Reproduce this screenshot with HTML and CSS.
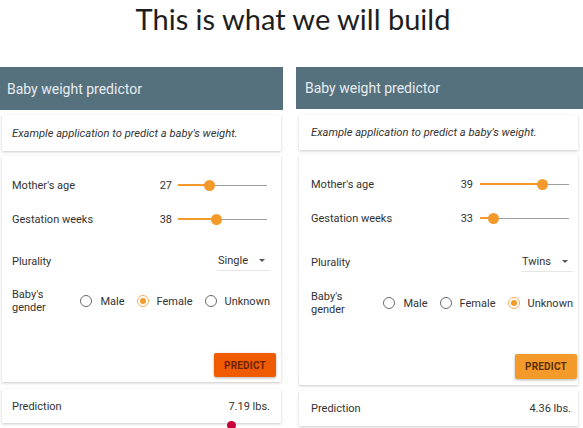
FILE: index.html
```html
<!DOCTYPE html>
<html>
<head>
<meta charset="utf-8">
<link rel="stylesheet" href="styles.css">
</head>
<body>
<h1 class="title">This is what we will build</h1>
<div class="panels">
  <section class="panel panel-a">
    <header class="panel-header">Baby weight predictor</header>
    <div class="card desc">Example application to predict a baby's weight.</div>
    <div class="card form">
      <div class="row slider-row r-age">
        <span class="label">Mother's age</span>
        <div class="slider-wrap">
          <span class="val">27</span>
          <div class="slider"><div class="fill" style="width:35%"></div><div class="thumb" style="left:35%"></div></div>
        </div>
      </div>
      <div class="row slider-row r-gest">
        <span class="label">Gestation weeks</span>
        <div class="slider-wrap">
          <span class="val">38</span>
          <div class="slider"><div class="fill" style="width:43%"></div><div class="thumb" style="left:43%"></div></div>
        </div>
      </div>
      <div class="row r-plural">
        <span class="label">Plurality</span>
        <div class="select"><span>Single</span><span class="caret"></span></div>
      </div>
      <div class="row r-gender">
        <span class="label two">Baby's<br>gender</span>
        <div class="radios">
          <span class="radio"><span class="circle"></span>Male</span>
          <span class="radio on"><span class="circle"></span>Female</span>
          <span class="radio"><span class="circle"></span>Unknown</span>
        </div>
      </div>
      <div class="actions">
        <button class="btn btn-red">PREDICT</button>
      </div>
    </div>
    <div class="card result">
      <span>Prediction</span><span>7.19 lbs.</span>
    </div>
  </section>
  <section class="panel panel-b">
    <header class="panel-header">Baby weight predictor</header>
    <div class="card desc">Example application to predict a baby's weight.</div>
    <div class="card form">
      <div class="row slider-row r-age">
        <span class="label">Mother's age</span>
        <div class="slider-wrap">
          <span class="val">39</span>
          <div class="slider"><div class="fill" style="width:70%"></div><div class="thumb" style="left:70%"></div></div>
        </div>
      </div>
      <div class="row slider-row r-gest">
        <span class="label">Gestation weeks</span>
        <div class="slider-wrap">
          <span class="val">33</span>
          <div class="slider"><div class="fill" style="width:15%"></div><div class="thumb" style="left:15%"></div></div>
        </div>
      </div>
      <div class="row r-plural">
        <span class="label">Plurality</span>
        <div class="select"><span>Twins</span><span class="caret"></span></div>
      </div>
      <div class="row r-gender">
        <span class="label two">Baby's<br>gender</span>
        <div class="radios">
          <span class="radio"><span class="circle"></span>Male</span>
          <span class="radio"><span class="circle"></span>Female</span>
          <span class="radio on"><span class="circle"></span>Unknown</span>
        </div>
      </div>
      <div class="actions">
        <button class="btn btn-orange">PREDICT</button>
      </div>
    </div>
    <div class="card result">
      <span>Prediction</span><span>4.36 lbs.</span>
    </div>
  </section>
</div>
<div class="cursor-dot"></div>
</body>
</html>
```
FILE: styles.css
```css
html, body {
  margin: 0;
  padding: 0;
  background: #ffffff;
  width: 583px;
  height: 428px;
  overflow: hidden;
  position: relative;
}
body {
  font-family: Roboto, "Liberation Sans", sans-serif;
  color: #333;
}
.title {
  margin: 0;
  height: 67px;
  box-sizing: border-box;
  padding-top: 2px;
  padding-left: 3px;
  text-align: center;
  font-family: Lato, "Open Sans", sans-serif;
  font-weight: 400;
  font-size: 29px;
  line-height: 34px;
  color: #1e1e1e;
}
.panels {
  display: flex;
  gap: 13px;
}
.panel {
  display: flex;
  flex-direction: column;
  flex: none;
}
.panel-a { width: 283px; }
.panel-b { width: 290px; }
.panel-header {
  background: #56717e;
  color: #e6ecef;
  font-size: 14px;
  height: 43px;
  box-sizing: border-box;
  padding-left: 7px;
  display: flex;
  align-items: center;
}
.panel-b .panel-header { height: 42px; padding-left: 9px; }
.card {
  background: #fff;
  box-shadow: 0 1px 3px rgba(0,0,0,0.22);
  margin: 5px 2px 0;
  border-radius: 1px;
}
.panel-b .card { margin-left: 3px; margin-right: 8px; }
.desc {
  height: 36px;
  box-sizing: border-box;
  display: flex;
  align-items: center;
  padding-left: 10px;
  font-style: italic;
  font-size: 11.2px;
  color: #333;
}
.panel-b .desc { height: 35px; padding-left: 12px; margin-top: 6px; }
.form {
  height: 226px;
  box-sizing: border-box;
  padding: 0 11px 0 10px;
  display: flex;
  flex-direction: column;
  font-size: 11px;
  position: relative;
}
.panel-b .form { height: 230px; padding: 0 5px 0 12px; }
.row {
  display: flex;
  align-items: center;
  justify-content: space-between;
}
.r-age { height: 18px; margin-top: 20px; }
.r-gest { height: 18px; margin-top: 16px; }
.r-plural { height: 18px; margin-top: 24px; }
.r-gender { height: 28px; margin-top: 17px; }
.panel-b .r-plural { margin-top: 26px; }
.panel-b .r-gender { margin-top: 18px; }
.label { color: #333; }
.label.two { line-height: 13px; }
.slider-wrap {
  display: flex;
  align-items: center;
  gap: 6px;
  margin-right: 3px;
}
.panel-b .slider-wrap { margin-right: 4px; }
.val { color: #333; }
.slider {
  width: 89px;
  height: 1px;
  background: #9e9e9e;
  position: relative;
}
.panel-b .slider { width: 89px; margin-left: 1px; }
.fill {
  position: absolute;
  left: 0; top: -0.5px;
  height: 2px;
  background: #f39a2b;
}
.thumb {
  position: absolute;
  top: -5px;
  width: 11px; height: 11px;
  margin-left: -5.5px;
  border-radius: 50%;
  background: #f39a2b;
}
.select {
  display: flex;
  align-items: center;
  gap: 11px;
  border-bottom: 1px solid #e6e6e6;
  padding: 0 5px 3px 1px;
  margin-top: 2px;
}
.caret {
  width: 0; height: 0;
  border-left: 3.5px solid transparent;
  border-right: 3.5px solid transparent;
  border-top: 3.5px solid #555;
}
.radios {
  display: flex;
  align-items: center;
  gap: 12px;
}
.radio {
  display: flex;
  align-items: center;
  gap: 8px;
  color: #333;
}
.circle {
  width: 10px; height: 10px;
  border: 1.5px solid #6a6a6a;
  border-radius: 50%;
  position: relative;
}
.radio.on .circle { border-color: #f5ad55; }
.radio.on .circle::after {
  content: "";
  position: absolute;
  left: 2px; top: 2px;
  width: 6px; height: 6px;
  border-radius: 50%;
  background: #f39a2b;
}
.actions {
  margin-top: auto;
  margin-bottom: 5px;
  display: flex;
  justify-content: flex-end;
  margin-right: -6px;
}
.panel-b .actions { margin-bottom: 6px; margin-right: -4px; }
.btn {
  border: none;
  font-family: Roboto, "Liberation Sans", sans-serif;
  font-weight: 700;
  font-size: 10px;
  letter-spacing: 0.2px;
  width: 62px;
  height: 24px;
  border-radius: 2px;
  box-shadow: 0 1px 3px rgba(0,0,0,0.3);
  padding: 0;
}
.btn-red { background: #f05a00; color: #6e2300; }
.btn-orange { background: #f39a2b; color: #5a3000; width: 62px; height: 25px; }
.result {
  margin-top: 7px;
  height: 34px;
  box-sizing: border-box;
  display: flex;
  align-items: center;
  justify-content: space-between;
  padding: 0 11px 0 10px;
  font-size: 11px;
  color: #333;
}
.panel-b .result { height: 35px; margin-top: 6px; padding: 0 7px 0 12px; }
.cursor-dot {
  position: absolute;
  left: 227px;
  top: 421px;
  width: 9px; height: 9px;
  border-radius: 50%;
  background: #c8003c;
}
```
